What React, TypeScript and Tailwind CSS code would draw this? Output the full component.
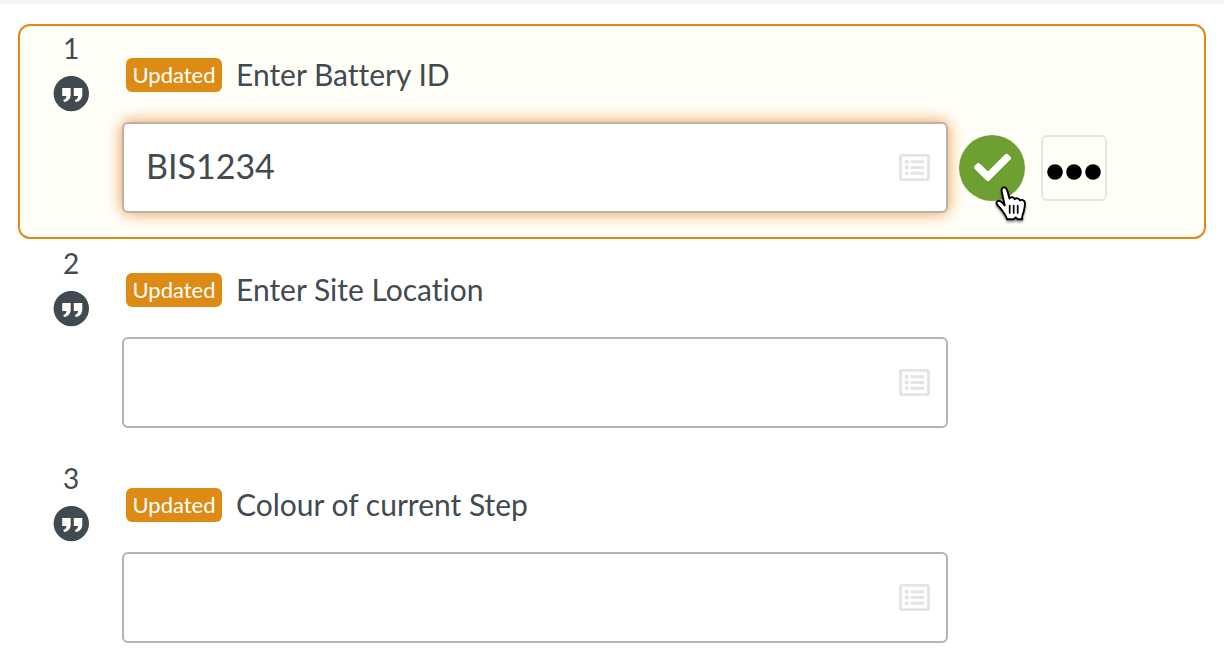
import { useState } from "react";
import { FaCheck, FaRegListAlt } from "react-icons/fa";

type Step = { id: number; label: string; value: string; active: boolean };

const steps: Step[] = [
  { id: 1, label: "Enter Battery ID", value: "BIS1234", active: true },
  { id: 2, label: "Enter Site Location", value: "", active: false },
  { id: 3, label: "Colour of current Step", value: "", active: false },
];

function QuoteIcon() {
  return (
    <svg viewBox="0 0 36 36" className="size-9" aria-hidden="true">
      <circle cx="18.3" cy="17.6" r="17.7" fill="#414a51" />
      <path
        d="M9.200 12H17.700v6.300c0 4.200-2.400 7.200-6.600 7.700l-.9-1.900c2-.6 3.200-2 3.300-4.100H9.200zM20.800 12H29.300v6.300c0 4.200-2.400 7.200-6.600 7.700l-.9-1.900c2-.6 3.200-2 3.300-4.100h-4.300z"
        fill="#fffff8"
      />
    </svg>
  );
}

function HandCursor() {
  return (
    <svg
      viewBox="0 0 32 36"
      className="pointer-events-none absolute top-[51px] left-[35px] h-9 w-[33px] drop-shadow-[0_2px_1px_rgba(0,0,0,0.4)]"
      aria-hidden="true"
    >
      <path
        d="M10.200 19.500 7.500 7C6.700 3.500 7.300 1.700 9 1.400c2-.3 3.200 1 3.900 3.500l2.100 7.600c.8-1.700 4.300-1.900 5.200.7 1.200-1.500 4.500-1.100 5.200 1.200 1.700-1.100 4.700-.4 5 2.300.3 3-.4 5.800-1.100 8.600-.6 2.300-1.600 3.900-1.600 5.700v2.200h-4.900l-1.600-1.800-1.700 1.800h-7c-.5-2.800-2.400-5-4.400-7.900-1.300-2-2.600-3.600-4.400-5.300-1.900-1.900-2.100-3.600-1-4.700 1.900-1.700 5 .4 7.500 4.200z"
        fill="white"
        stroke="black"
        strokeWidth="1.900"
        strokeLinejoin="round"
      />
      <path
        d="M15.200 19.500v7.500M19.200 19.500v7.500M23.200 19.500v7.500"
        stroke="black"
        strokeWidth="1.700"
        strokeLinecap="round"
      />
    </svg>
  );
}

function StepRow({ step }: { step: Step }) {
  const [value, setValue] = useState(step.value);
  const fieldId = `step-${step.id}`;
  return (
    <li
      className={`flex rounded-xl border-2 pr-24 pb-6 ${
        step.active ? "border-[#dd8b14] bg-[#fffff8]" : "border-transparent"
      }`}
    >
      <div className="flex w-[102px] shrink-0 flex-col items-center gap-2.5 pt-1 text-[28px] leading-9">
        <span>{step.id}</span>
        <QuoteIcon />
      </div>
      <div className="min-w-0 flex-1 pt-8">
        <div className="flex h-[34px] items-center gap-[14px] pl-1">
          <span className="flex h-[34px] w-24 items-center justify-center rounded-md bg-[#dd8b14] pb-0.5 text-[22px] text-white">
            Updated
          </span>
          <label htmlFor={fieldId} className="pb-0.5 text-[30px] leading-9">
            {step.label}
          </label>
        </div>
        <div className="mt-[30px] flex items-center">
          <div
            className={`flex h-[91px] flex-1 items-center rounded-md border-2 border-[#b5b3b1] bg-white pr-4 pl-[22px] ${
              step.active ? "shadow-[0_0_16px_#e8953f]" : ""
            }`}
          >
            <input
              id={fieldId}
              type="text"
              value={value}
              onChange={(event) => setValue(event.target.value)}
              className="h-full min-w-0 flex-1 bg-transparent pb-1 text-[34px] outline-none"
            />
            <FaRegListAlt className="size-[31px] text-[#e4e4e4]" aria-hidden="true" />
          </div>
          <div className="flex w-40 shrink-0 items-center gap-4 pl-[11px]">
            {step.active && (
              <>
                <div className="relative">
                  <button
                    type="button"
                    aria-label="Confirm"
                    className="flex size-[66px] items-center justify-center rounded-full bg-[#6e9f31] text-white"
                  >
                    <FaCheck className="size-[37px]" />
                  </button>
                  <HandCursor />
                </div>
                <button
                  type="button"
                  aria-label="More options"
                  className="flex size-[66px] items-center justify-center rounded-md border-2 border-[#e5e5e5] pt-2"
                >
                  <svg viewBox="0 0 54 16" className="h-4 w-[54px]" aria-hidden="true">
                    <circle cx="8" cy="8" r="7.800" />
                    <circle cx="27" cy="8" r="7.800" />
                    <circle cx="46" cy="8" r="7.800" />
                  </svg>
                </button>
              </>
            )}
          </div>
        </div>
      </div>
    </li>
  );
}

export default function App() {
  return (
    <main className="min-h-screen border-t-4 border-[#f5f5f5] bg-white px-[18px] pt-5 font-[Lato,sans-serif] text-[#414a51] [font-variant-ligatures:none]">
      <ol>
        {steps.map((step) => (
          <StepRow key={step.id} step={step} />
        ))}
      </ol>
    </main>
  );
}
